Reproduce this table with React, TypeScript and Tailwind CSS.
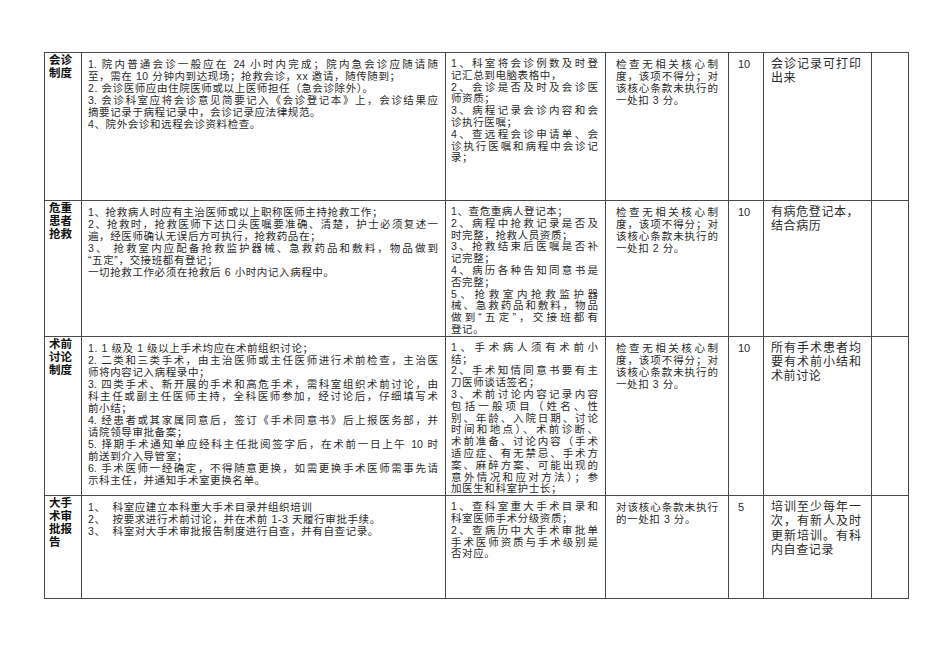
type Row = {
  h: number;
  title: string[];
  req: string[];
  check: string[];
  rule: string[];
  score: string;
  note: string[];
};

// "^" at the start of a line = full line, spread to both edges
const rows: Row[] = [
  {
    h: 148,
    title: ['会诊', '制度'],
    req: [
      '^1. 院内普通会诊一般应在 24 小时内完成；院内急会诊应随请随',
      '至，需在 10 分钟内到达现场；抢救会诊，xx 邀请，随传随到；',
      '2. 会诊医师应由住院医师或以上医师担任（急会诊除外）。',
      '^3. 会诊科室应将会诊意见简要记入《会诊登记本》上，会诊结果应',
      '摘要记录于病程记录中，会诊记录应法律规范。',
      '4、院外会诊和远程会诊资料检查。',
    ],
    check: [
      '^1、科室将会诊例数及时登',
      '记汇总到电脑表格中，',
      '^2、会诊是否及时及会诊医',
      '师资质；',
      '^3、病程记录会诊内容和会',
      '诊执行医嘱；',
      '^4、查远程会诊申请单、会',
      '^诊执行医嘱和病程中会诊记',
      '录；',
    ],
    rule: ['^检查无相关核心制', '^度，该项不得分；对', '^该核心条款未执行的', '一处扣 3 分。'],
    score: '10',
    note: ['^会诊记录可打印', '出来'],
  },
  {
    h: 135,
    title: ['危重', '患者', '抢救'],
    req: [
      '1、抢救病人时应有主治医师或以上职称医师主持抢救工作；',
      '^2、抢救时，抢救医师下达口头医嘱要准确、清楚，护士必须复述一',
      '遍，经医师确认无误后方可执行，抢救药品在；',
      '^3、 抢救室内应配备抢救监护器械、急救药品和敷料，物品做到',
      '“五定”，交接班都有登记；',
      '一切抢救工作必须在抢救后 6 小时内记入病程中。',
    ],
    check: [
      '1、查危重病人登记本；',
      '^2、病程中抢救记录是否及',
      '时完整，抢救人员资质；',
      '^3、抢救结束后医嘱是否补',
      '记完整；',
      '^4、病历各种告知同意书是',
      '否完整；',
      '^5、抢救室内抢救监护器',
      '^械、急救药品和敷料，物品',
      '^做到“五定”，交接班都有',
      '登记。',
    ],
    rule: ['^检查无相关核心制', '^度，该项不得分；对', '^该核心条款未执行的', '一处扣 2 分。'],
    score: '10',
    note: ['有病危登记本，', '结合病历'],
  },
  {
    h: 154,
    title: ['术前', '讨论', '制度'],
    req: [
      '1. 1 级及 1 级以上手术均应在术前组织讨论；',
      '^2. 二类和三类手术，由主治医师或主任医师进行术前检查，主治医',
      '师将内容记入病程录中；',
      '^3. 四类手术、新开展的手术和高危手术，需科室组织术前讨论，由',
      '^科主任或副主任医师主持，全科医师参加，经讨论后，仔细填写术',
      '前小结；',
      '^4. 经患者或其家属同意后，签订《手术同意书》后上报医务部，并',
      '请院领导审批备案；',
      '^5. 择期手术通知单应经科主任批阅签字后，在术前一日上午 10 时',
      '前送到介入导管室；',
      '^6. 手术医师一经确定，不得随意更换，如需更换手术医师需事先请',
      '示科主任，并通知手术室更换名单。',
    ],
    check: [
      '^1、手术病人须有术前小',
      '结；',
      '^2、手术知情同意书要有主',
      '刀医师谈话签名；',
      '^3、术前讨论内容记录内容',
      '^包括一般项目（姓名、性',
      '^别、年龄、入院日期、讨论',
      '^时间和地点）、术前诊断、',
      '^术前准备、讨论内容（手术',
      '^适应症、有无禁忌、手术方',
      '^案、麻醉方案、可能出现的',
      '^意外情况和应对方法）；参',
      '加医生和科室护士长；',
    ],
    rule: ['^检查无相关核心制', '^度，该项不得分；对', '^该核心条款未执行的', '一处扣 3 分。'],
    score: '10',
    note: ['^所有手术患者均', '^要有术前小结和', '术前讨论'],
  },
  {
    h: 103,
    title: ['大手', '术审', '批报', '告'],
    req: [
      '1、  科室应建立本科重大手术目录并组织培训',
      '2、  按要求进行术前讨论，并在术前 1-3 天履行审批手续。',
      '3、  科室对大手术审批报告制度进行自查，并有自查记录。',
    ],
    check: [
      '^1、查科室重大手术目录和',
      '科室医师手术分级资质；',
      '^2、查病历中大手术审批单',
      '^手术医师资质与手术级别是',
      '否对应。',
    ],
    rule: ['^对该核心条款未执行', '的一处扣 3 分。'],
    score: '5',
    note: ['^培训至少每年一', '^次，有新人及时', '^更新培训。有科', '内自查记录'],
  },
];

function Lines({ lines }: { lines: string[] }) {
  return (
    <>
      {lines.map((l, i) =>
        l.startsWith('^') ? (
          <div key={i} className="text-justify [text-align-last:justify] whitespace-pre-wrap">
            {l.slice(1)}
          </div>
        ) : (
          <div key={i} className="whitespace-pre-wrap tracking-[0.6px]">
            {l}
          </div>
        )
      )}
    </>
  );
}

const cell = 'border border-[#4a4a4a] align-top';

export default function App() {
  return (
    <div className="w-[950px] h-[672px] bg-white pl-[44px] pt-[52px] font-['Liberation_Sans','Noto_Sans_CJK_SC',sans-serif] text-[#2a2a2a]">
      <table className="border-collapse table-fixed w-[864px]">
        <colgroup>
          <col className="w-[37px]" />
          <col className="w-[364px]" />
          <col className="w-[160px]" />
          <col className="w-[123px]" />
          <col className="w-[35px]" />
          <col className="w-[108px]" />
          <col className="w-[37px]" />
        </colgroup>
        <tbody>
          {rows.map((r) => (
            <tr key={r.title.join('')} style={{ height: r.h }}>
              <td className={`${cell} pl-[4px] pt-[1px] text-[11.5px] leading-[13px] font-bold text-[#111]`}>
                {r.title.map((t) => (
                  <div key={t}>{t}</div>
                ))}
              </td>
              <td className={`${cell} pl-[6px] pr-[7px] pt-[5px] text-[10.5px] leading-[12px]`}>
                <Lines lines={r.req} />
              </td>
              <td className={`${cell} pl-[5px] pr-[7px] pt-[5px] text-[10.5px] leading-[11.8px]`}>
                <Lines lines={r.check} />
              </td>
              <td className={`${cell} px-[10px] pt-[5px] text-[10.5px] leading-[12px]`}>
                <Lines lines={r.rule} />
              </td>
              <td className={`${cell} pl-[9px] pt-[5px] text-[11px] leading-[12px]`}>{r.score}</td>
              <td className={`${cell} pl-[7px] pr-[10px] pt-[4px] text-[12px] leading-[14.2px]`}>
                <Lines lines={r.note} />
              </td>
              <td className={cell}></td>
            </tr>
          ))}
        </tbody>
      </table>
    </div>
  );
}
